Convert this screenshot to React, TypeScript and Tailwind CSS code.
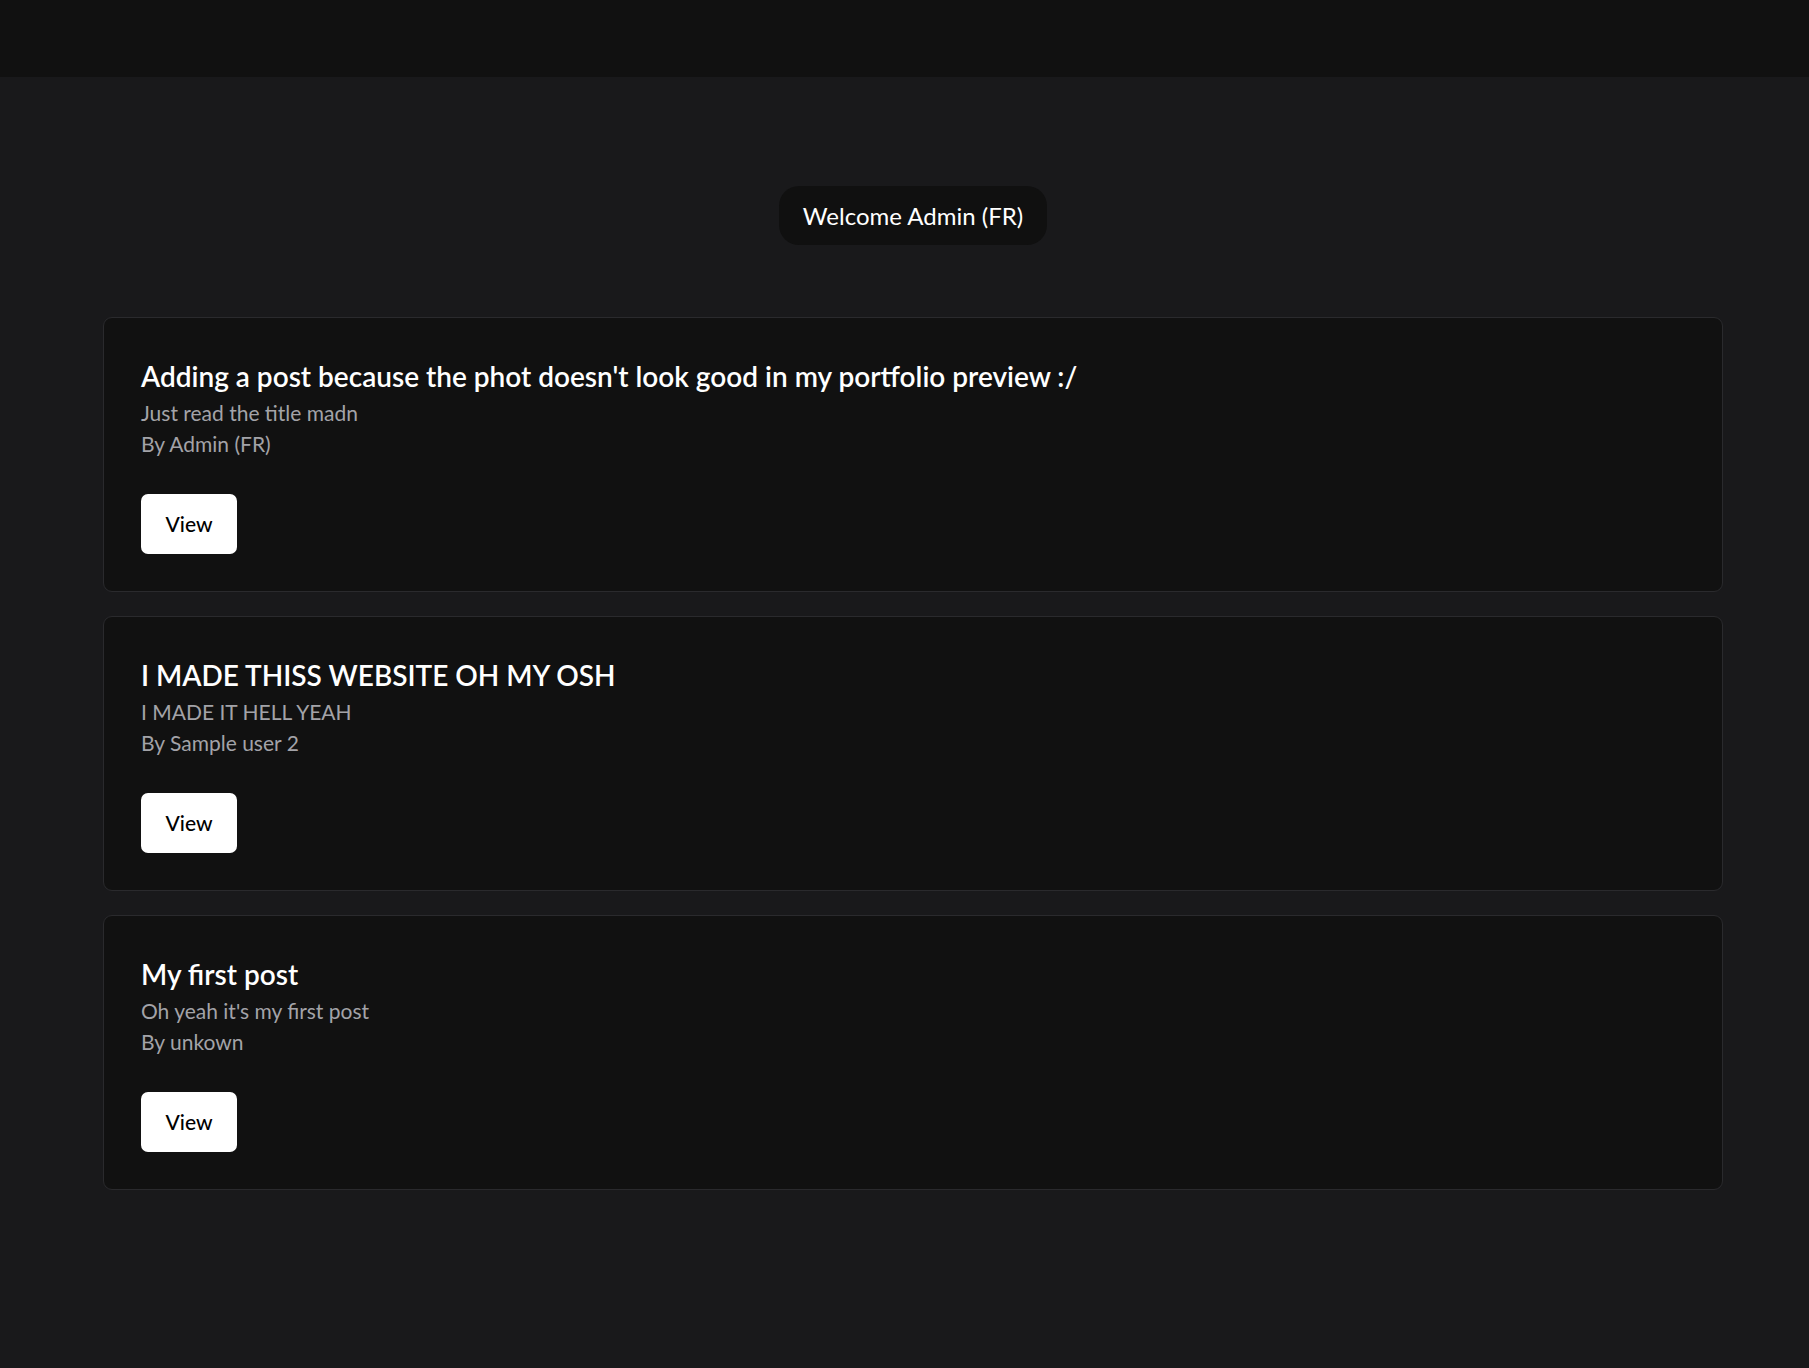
import React from 'react';

interface Post {
  title: string;
  body: string;
  author: string;
}

const posts: Post[] = [
  {
    title: "Adding a post because the phot doesn't look good in my portfolio preview :/",
    body: 'Just read the title madn',
    author: 'Admin (FR)',
  },
  { title: 'I MADE THISS WEBSITE OH MY OSH', body: 'I MADE IT HELL YEAH', author: 'Sample user 2' },
  { title: 'My first post', body: "Oh yeah it's my first post", author: 'unkown' },
];

const PostCard: React.FC<{ post: Post }> = ({ post }) => (
  <div className="bg-[#111111] border border-[#2a2a2d] rounded-[9px] pl-[37px] pr-8 pt-[37px] pb-[37px]">
    <h2 className="text-[28px] font-semibold text-white leading-[42px]">{post.title}</h2>
    <p className="text-[21px] text-[#a3a3a8] leading-[31px]">{post.body}</p>
    <p className="text-[21px] text-[#a3a3a8] leading-[32px]">By {post.author}</p>
    <button className="mt-[34px] w-[96px] h-[60px] bg-white text-black rounded-[7px] text-[21px] font-medium">
      View
    </button>
  </div>
);

export default function App() {
  return (
    <div className="min-h-[1368px] bg-[#19191b] font-['Lato','Noto_Sans',sans-serif]">
      <header className="h-[77px] bg-[#111111]" />
      <main className="pl-[103px] pr-[86px] pt-[109px]">
        <div className="flex justify-center">
          <div className="h-[59px] px-6 rounded-[20px] bg-[#101010] flex items-center text-[24px] text-white">
            Welcome Admin (FR)
          </div>
        </div>
        <div className="mt-[72px] flex flex-col gap-6">
          {posts.map((p, i) => (
            <PostCard key={i} post={p} />
          ))}
        </div>
      </main>
    </div>
  );
}
